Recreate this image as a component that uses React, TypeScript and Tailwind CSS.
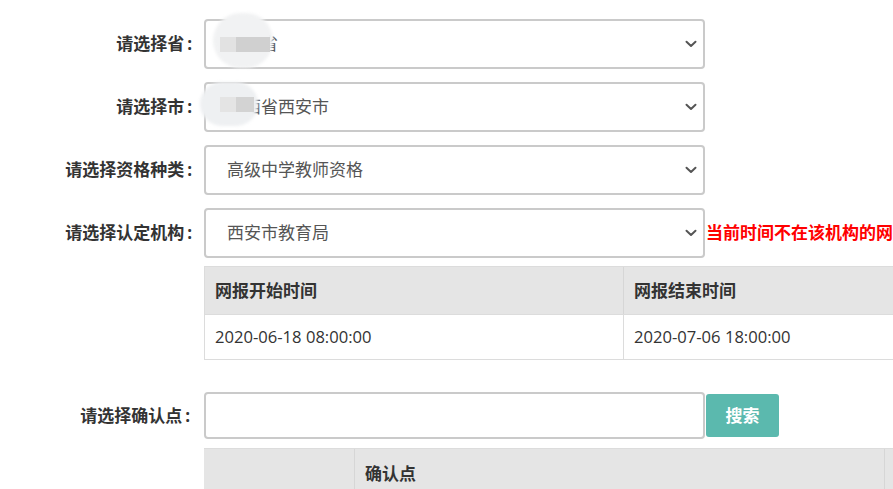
import React from "react";

const font = { fontFamily: '"Open Sans", "Noto Sans CJK SC", sans-serif' };

function Chevron() {
  return (
    <svg width="12" height="8" viewBox="0 0 12 8" className="absolute right-[6px] top-1/2 -translate-y-1/2">
      <path d="M1.5 1.8 L6 6 L10.5 1.8" fill="none" stroke="#555" strokeWidth="2" strokeLinecap="round" strokeLinejoin="round" />
    </svg>
  );
}

function Label({ text, w = 193 }: { text: string; w?: number }) {
  return (
    <div
      className={`shrink-0 text-right text-[17px] font-bold text-[#333] whitespace-nowrap ${w === 193 ? "w-[195px]" : "w-[193px]"}`}
    >
      {text}
      <span className="ml-[3px] mr-[3px]">:</span>
    </div>
  );
}

function SelectRow({ label, value, extra, children }: { label: string; value: string; extra?: React.ReactNode; children?: React.ReactNode }) {
  return (
    <div className="flex items-center h-[50px]">
      <Label text={label} />
      <div className="relative shrink-0 ml-[9px] w-[501px] h-full border-2 border-[#cacaca] rounded-[4px] bg-white flex items-center pl-[21px] text-[17px] text-[#555]">
        <span>{value}</span>
        <Chevron />
        {children}
      </div>
      {extra}
    </div>
  );
}

export default function App() {
  return (
    <div className="w-[893px] h-[489px] overflow-hidden bg-white relative" style={font}>
      <div className="pt-[19px] flex flex-col gap-[13px]">
        <SelectRow label="请选择省" value="陕西省">
          <div className="absolute left-[7px] top-[-8px] w-[60px] h-[55px] rounded-full bg-[#f1f2f3] blur-[1.5px]" />
          <div className="absolute left-[14px] top-[16px] w-[16px] h-[15px] bg-[#e2e2e2]" />
          <div className="absolute left-[30px] top-[16px] w-[34px] h-[15px] bg-[#d0d0d0]" />
        </SelectRow>
        <SelectRow label="请选择市" value="陕西省西安市">
          <div className="absolute left-[-6px] top-[-2px] w-[58px] h-[44px] rounded-full bg-[#eef0f2] blur-[1.5px]" />
          <div className="absolute left-[14px] top-[13px] w-[16px] h-[15px] bg-[#e4e4e4]" />
          <div className="absolute left-[30px] top-[13px] w-[18px] h-[15px] bg-[#d3d3d3]" />
        </SelectRow>
        <SelectRow label="请选择资格种类" value="高级中学教师资格" />
        <SelectRow
          label="请选择认定机构"
          value="西安市教育局"
          extra={<div className="ml-[1px] whitespace-nowrap text-[17px] font-bold text-[#ff0000]">当前时间不在该机构的网报时间内</div>}
        />
      </div>

      <div className="ml-[204px] mt-[8px] w-[840px] border border-[#dcdcdc] flex flex-col">
        <div className="flex h-[47px] bg-[#e5e5e5] text-[17px] font-bold text-[#333]">
          <div className="w-[419px] flex items-center pl-[10px] border-r border-[#d6d6d6]">网报开始时间</div>
          <div className="flex-1 flex items-center pl-[10px]">网报结束时间</div>
        </div>
        <div className="flex h-[45px] bg-white text-[16.6px] text-[#333] border-t border-[#dcdcdc]">
          <div className="w-[419px] flex items-center pl-[10px] border-r border-[#dcdcdc]">2020-06-18 08:00:00</div>
          <div className="flex-1 flex items-center pl-[10px]">2020-07-06 18:00:00</div>
        </div>
      </div>

      <div className="mt-[32px] flex items-center h-[47px]">
        <Label text="请选择确认点" w={191} />
        <div className="shrink-0 ml-[11px] w-[501px] h-full border-2 border-[#cacaca] rounded-[4px] bg-white" />
        <button className="shrink-0 ml-[1px] w-[73px] h-[43px] rounded-[3px] bg-[#5bb9ae] text-white text-[17px] font-bold flex items-center justify-center">搜索</button>
      </div>

      <div className="ml-[204px] mt-[9px] w-[700px] flex h-[60px] bg-[#e5e5e5] border-t border-[#dcdcdc] text-[17px] font-bold text-[#333]">
        <div className="w-[151px] border-r border-[#d6d6d6]" />
        <div className="w-[530px] border-r border-[#d6d6d6] pl-[10px] pt-[12px]">确认点</div>
        <div className="flex-1" />
      </div>
    </div>
  );
}
